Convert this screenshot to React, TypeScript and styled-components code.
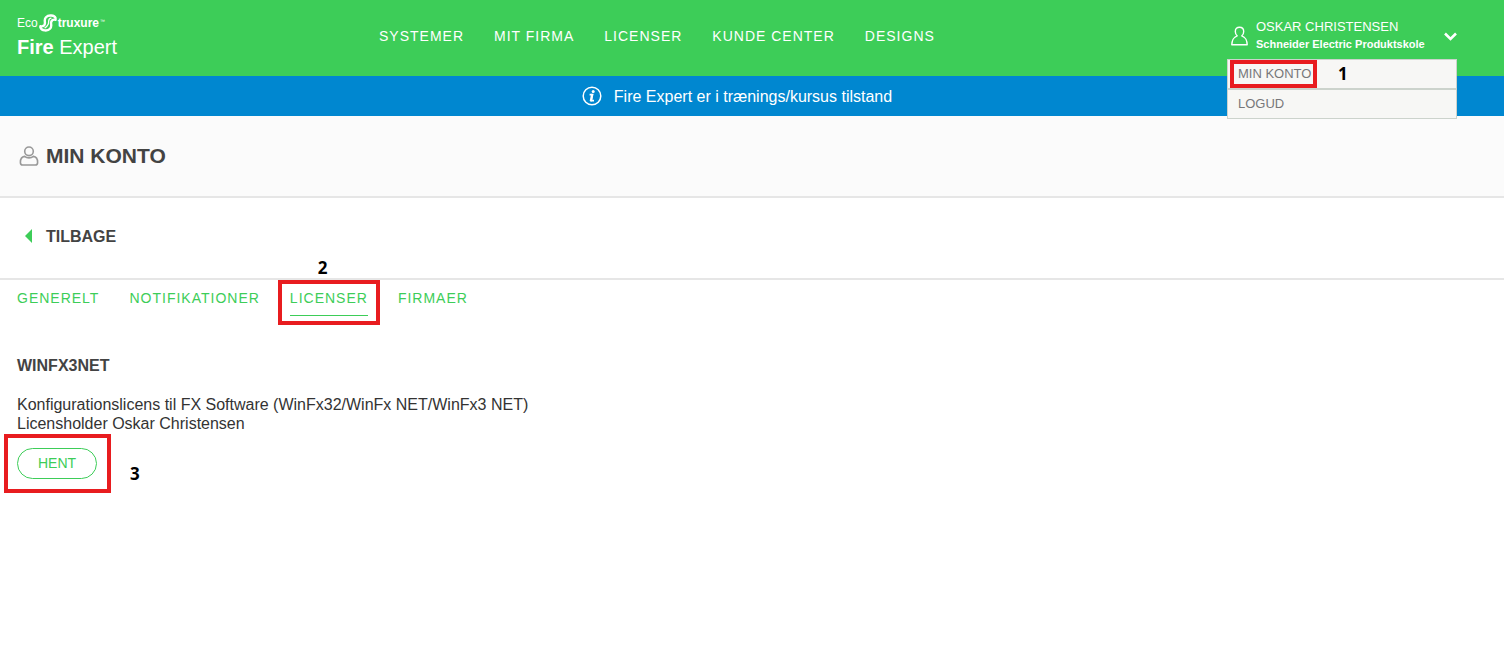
import React from 'react';
import styled, { createGlobalStyle, css } from 'styled-components';

const green = '#3dcd58';
const ink = '#434343';

const GlobalStyle = createGlobalStyle`
  * { box-sizing: border-box; }
  body {
    margin: 0;
    background: #fff;
    color: #333;
    font: 16px/19px "Liberation Sans", Arial, sans-serif;
  }
  a { color: inherit; text-decoration: none; }
  ul { list-style: none; margin: 0; padding: 0; }
  h1, h2, p { margin: 0; }
  button { font: inherit; cursor: pointer; }
`;

const Header = styled.header`
  display: grid;
  grid-template-columns: 25% 1fr 230px;
  align-items: start;
  min-height: 76px;
  padding: 12px 47px 0 17px;
  background: ${green};
  color: #fff;
`;

const Brand = styled.a`
  display: grid;
  justify-content: start;
`;

const BrandTop = styled.span`
  display: flex;
  align-items: center;
  gap: 1px;
  height: 22px;
  font-size: 12px;
  line-height: 22px;
`;

const TradeMark = styled.sup`
  font-size: 5px;
  line-height: 5px;
  align-self: start;
  padding-top: 7px;
`;

const Product = styled.span`
  font-size: 20px;
  line-height: 26px;
`;

const Nav = styled.nav`
  display: flex;
  gap: 30px;
  padding: 15px 0 0 2px;
  font-size: 14px;
  letter-spacing: 1px;
`;

const Account = styled.div`
  position: relative;
`;

const AccountButton = styled.button`
  display: flex;
  align-items: center;
  width: 100%;
  gap: 8px;
  padding: 6px 0 0 4px;
  border: 0;
  background: none;
  color: #fff;
  text-align: left;
`;

const AccountText = styled.span`
  flex: 1;
  display: grid;
  white-space: nowrap;
`;

const UserName = styled.span`
  font-size: 13px;
  line-height: 18px;
`;

const Company = styled.span`
  font-size: 11px;
  line-height: 17px;
  font-weight: bold;
`;

const Menu = styled.ul`
  position: absolute;
  z-index: 2;
  top: 47px;
  left: 0;
  right: 0;
  border: 1px solid #ccd3cc;
  background: #f7f7f5;
  color: #77777a;
  font-size: 13px;
  line-height: 28px;
`;

const MenuItem = styled.li`
  display: flex;
  padding-left: 10px;
  & + & { border-top: 2px solid #ccd3cc; }
`;

const Banner = styled.div`
  display: flex;
  align-items: center;
  justify-content: center;
  gap: 12px;
  min-height: 40px;
  padding-right: 30px;
  background: #0087d0;
  color: #fff;
`;

const Bar = styled.div<{ $tinted?: boolean }>`
  display: flex;
  align-items: center;
  min-height: 82px;
  padding: 0 19px;
  border-bottom: 2px solid #e6e6e6;
  background: ${(p) => (p.$tinted ? '#fbfbfb' : '#fff')};
  color: ${ink};
`;

const Title = styled.h1`
  padding-left: 7px;
  font-size: 21px;
  line-height: 24px;
`;

const Back = styled.a`
  display: flex;
  align-items: center;
  gap: 14px;
  padding: 0 5px 4px;
  font-weight: bold;
`;

const Tabs = styled.nav`
  display: flex;
  gap: 30px;
  padding: 9px 17px 0;
  color: ${green};
  font-size: 14px;
  letter-spacing: 1px;
`;

const Tab = styled.a<{ $active?: boolean }>`
  position: relative;
  padding-bottom: 7px;
  border-bottom: 1px solid ${(p) => (p.$active ? green : 'transparent')};
`;

const License = styled.section`
  padding: 40px 17px;
`;

const LicenseName = styled.h2`
  padding-bottom: 20px;
  color: ${ink};
  font-size: 16px;
  line-height: 19px;
`;

const Download = styled.div`
  position: relative;
  display: inline-block;
  margin-top: 15px;
`;

const Pill = styled.button`
  display: block;
  height: 31px;
  padding: 0 20px;
  border: 1px solid ${green};
  border-radius: 16px;
  background: none;
  color: ${green};
  font-size: 14px;
`;

const Anchor = styled.span`
  position: relative;
`;

const frames = {
  menu: css`inset: 0 -6px 0 -8px;`,
  tab: css`inset: -9px -12px -10px -12px;`,
  button: css`inset: -14px -14px -14px -13px;`,
};

const Frame = styled.span<{ $around: keyof typeof frames }>`
  position: absolute;
  ${(p) => frames[p.$around]}
  border: 4px solid #e81c1f;
  pointer-events: none;
`;

const steps = {
  menu: css`left: 100px; top: 2px;`,
  tab: css`left: 28px; top: -33px;`,
  button: css`left: 113px; top: 14px;`,
};

const Step = styled.span<{ $by: keyof typeof steps }>`
  position: absolute;
  ${(p) => steps[p.$by]}
  color: #000;
  font: bold 17px/24px "Open Sans", "Noto Sans", sans-serif;
`;

const navLinks = ['SYSTEMER', 'MIT FIRMA', 'LICENSER', 'KUNDE CENTER', 'DESIGNS'];
const tabs = ['GENERELT', 'NOTIFIKATIONER', 'LICENSER', 'FIRMAER'];

const BrandMark = () => (
  <svg width="18" height="18" viewBox="0 0 18 18" fill="none" stroke="#fff" strokeLinecap="round" aria-hidden="true">
    <path d="M16.6 4.2C15.4 1 9.4.6 7 3.2C4.4 6 6.8 8 5.6 10.6C4.8 12.2 3.2 12.6 1.4 12.2" strokeWidth="2.4" />
    <path d="M1.4 13.4C2.6 17 8.6 17.4 11 14.8C13.6 12 11.2 10 12.4 7.4C13.2 5.8 14.8 5.4 16.6 5.8" strokeWidth="2.4" />
    <path d="M12 4.2C8.2 5 10.6 8 9 10.6C8.2 12.4 7.2 13.2 6 13.8" strokeWidth="1.3" />
  </svg>
);

const App = () => (
  <>
    <GlobalStyle />
    <Header>
      <Brand href="#" aria-label="EcoStruxure Fire Expert">
        <BrandTop>
          Eco
          <BrandMark />
          <b>truxure</b>
          <TradeMark>™</TradeMark>
        </BrandTop>
        <Product><b>Fire</b> Expert</Product>
      </Brand>
      <Nav>
        {navLinks.map((label) => <a href="#" key={label}>{label}</a>)}
      </Nav>
      <Account>
        <AccountButton type="button" aria-expanded="true">
          <svg width="17" height="20" viewBox="0 0 17 20" fill="none" stroke="#fff" strokeWidth="1.4" strokeLinejoin="round" aria-hidden="true">
            <path d="M6.2 9.8C4.8 8.8 4.3 7.2 4.3 5.4C4.3 2.8 6 1.2 8.5 1.2S12.7 2.8 12.7 5.4C12.7 7.2 12.2 8.8 10.8 9.8C14.2 11.2 16 13 16.2 18.8H.8C1 13 2.8 11.2 6.2 9.8Z" />
          </svg>
          <AccountText>
            <UserName>OSKAR CHRISTENSEN</UserName>
            <Company>Schneider Electric Produktskole</Company>
          </AccountText>
          <svg width="13" height="10" viewBox="0 0 13 10" fill="none" stroke="#fff" strokeWidth="2.6" aria-hidden="true">
            <path d="M1 2.5L6.5 7.9L12 2.5" />
          </svg>
        </AccountButton>
        <Menu>
          <MenuItem>
            <Anchor>
              <a href="#">MIN KONTO</a>
              <Frame $around="menu" />
              <Step $by="menu">1</Step>
            </Anchor>
          </MenuItem>
          <MenuItem><a href="#">LOGUD</a></MenuItem>
        </Menu>
      </Account>
    </Header>
    <Banner role="status">
      <svg width="20" height="20" viewBox="0 0 20 20" fill="none" stroke="#fff" aria-hidden="true">
        <circle cx="10" cy="10" r="8.8" strokeWidth="1.5" />
        <circle cx="11.2" cy="5.4" r="1.5" fill="#fff" stroke="none" />
        <path d="M7.6 8.6H10.6L9.2 14.6H12" strokeWidth="1.6" />
        <path d="M10.2 8L8.8 15.2" strokeWidth="2.2" />
      </svg>
      Fire Expert er i trænings/kursus tilstand
    </Banner>
    <main>
      <Bar $tinted>
        <svg width="20" height="20" viewBox="0 0 20 20" fill="none" stroke="#999" strokeWidth="1.6" aria-hidden="true">
          <circle cx="10" cy="5.3" r="4.3" />
          <path d="M5.6 10.4C2.4 10.8 1.4 13.2 1.4 16.4C1.4 18.2 2 19 3.6 19H16.4C18 19 18.6 18.2 18.6 16.4C18.6 13.2 17.6 10.8 14.4 10.4C12 12.4 8 12.4 5.6 10.4Z" />
        </svg>
        <Title>MIN KONTO</Title>
      </Bar>
      <Bar>
        <Back href="#">
          <svg width="8" height="14" viewBox="0 0 8 14" fill={green} aria-hidden="true">
            <path d="M8 0V14L1 7Z" />
          </svg>
          TILBAGE
        </Back>
      </Bar>
      <Tabs>
        {tabs.map((label) => {
          const active = label === 'LICENSER';
          return (
            <Tab href="#" key={label} $active={active}>
              {label}
              {active && <Frame $around="tab" />}
              {active && <Step $by="tab">2</Step>}
            </Tab>
          );
        })}
      </Tabs>
      <License>
        <LicenseName>WINFX3NET</LicenseName>
        <p>Konfigurationslicens til FX Software (WinFx32/WinFx NET/WinFx3 NET)</p>
        <p>Licensholder Oskar Christensen</p>
        <Download>
          <Pill type="button">HENT</Pill>
          <Frame $around="button" />
          <Step $by="button">3</Step>
        </Download>
      </License>
    </main>
  </>
);

export default App;
